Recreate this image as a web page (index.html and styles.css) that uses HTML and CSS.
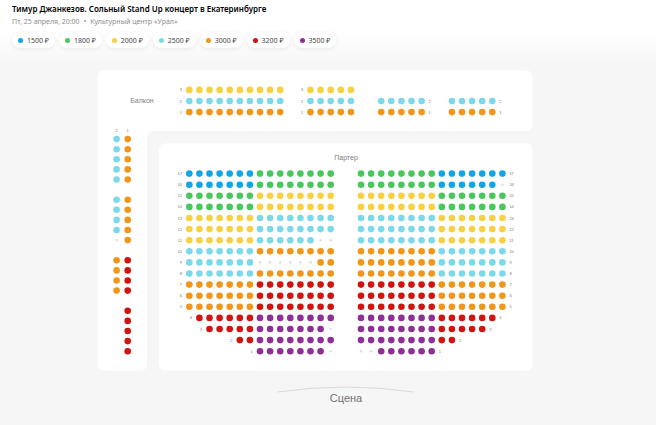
FILE: index.html
```html
<!DOCTYPE html>
<html lang="ru">
<head>
<meta charset="utf-8">
<meta name="viewport" content="width=device-width, initial-scale=1">
<title>Тимур Джанкезов. Сольный Stand Up концерт в Екатеринбурге</title>
<link rel="stylesheet" href="styles.css">
</head>
<body>
<header class="event">
  <h1 class="event-title">Тимур Джанкезов. Сольный Stand Up концерт в Екатеринбурге</h1>
  <p class="event-info"><span>Пт, 25 апреля, 20:00</span><span class="event-dot">•</span><span>Культурный центр «Урал»</span></p>
  <div class="prices">
    <button class="price" type="button"><span class="swatch swatch-b"></span>1500 ₽</button>
    <button class="price" type="button"><span class="swatch swatch-g"></span>1800 ₽</button>
    <button class="price" type="button"><span class="swatch swatch-y"></span>2000 ₽</button>
    <button class="price" type="button"><span class="swatch swatch-c"></span>2500 ₽</button>
    <button class="price" type="button"><span class="swatch swatch-o"></span>3000 ₽</button>
    <button class="price" type="button"><span class="swatch swatch-r"></span>3200 ₽</button>
    <button class="price" type="button"><span class="swatch swatch-p"></span>3500 ₽</button>
  </div>
</header>
<main class="hall">
  <svg class="hall-map" viewBox="0 64 656 361">
    <path class="zone" d="M103.500 70.500H526.500a6 6 0 0 1 6 6V125a6 6 0 0 1-6 6H153a6 6 0 0 0-6 6V364.500a6 6 0 0 1-6 6H103.500a6 6 0 0 1-6-6V76.500a6 6 0 0 1 6-6Z"/>
    <rect class="zone" x="159" y="143.500" width="373.500" height="227" rx="6"/>
    <text class="zone-name" x="142" y="103">Балкон</text>
    <text class="zone-name" x="346" y="159.500">Партер</text>
    <g id="seats"></g>
    <path class="stage-edge" d="M277.500 392Q346 382 413.500 392"/>
    <text class="stage-name" x="346" y="402">Сцена</text>
  </svg>
</main>
<script src="hall.js"></script>
</body>
</html>
```
FILE: styles.css
```css
* {
  box-sizing: border-box;
}

body {
  margin: 0;
  min-height: 100vh;
  background: #f6f6f6;
  color: #000;
  font-family: "Noto Sans", "Open Sans", sans-serif;
}

.event {
  padding: 3px 12px 16px;
  background: linear-gradient(#fff 50%, #f6f6f6);
}

.event-title {
  margin: 0;
  font-size: 8px;
  line-height: 12px;
  font-weight: 600;
}

.event-info {
  display: flex;
  gap: 4px;
  margin: 0;
  color: #8c8c8c;
  font-size: 7px;
  line-height: 13px;
}

.prices {
  display: flex;
  flex-wrap: wrap;
  gap: 4px;
  margin-top: 4px;
}

.price {
  display: flex;
  align-items: center;
  gap: 4px;
  height: 16px;
  padding: 0 6px;
  border: 0;
  border-radius: 8px;
  background: #fff;
  box-shadow: 0 1px 4px rgba(0, 0, 0, 0.08);
  color: #444;
  font: 7px "Noto Sans", "Open Sans", sans-serif;
  cursor: pointer;
}

.swatch {
  width: 5px;
  height: 5px;
  border-radius: 50%;
}

.swatch-b { background: #12a5e6; }
.swatch-g { background: #4ac75c; }
.swatch-y { background: #f7d142; }
.swatch-c { background: #7bd9ea; }
.swatch-o { background: #f0961b; }
.swatch-r { background: #d0140f; }
.swatch-p { background: #8e2f96; }

.hall-map {
  display: block;
  width: 100%;
  font-family: "Liberation Sans", Arial, sans-serif;
}

.zone {
  fill: #fff;
}

.zone-name {
  fill: #808080;
  font-size: 7px;
  text-anchor: middle;
}

.stage-name {
  fill: #707070;
  font-size: 11px;
  text-anchor: middle;
}

.stage-edge {
  fill: none;
  stroke: #dadada;
}

.row-name {
  fill: #777;
  font-size: 4px;
}

.row-name-start { text-anchor: end; }
.row-name-top { text-anchor: middle; }

.seat-b { fill: #12a5e6; }
.seat-g { fill: #4ac75c; }
.seat-y { fill: #f7d142; }
.seat-c { fill: #7bd9ea; }
.seat-o { fill: #f0961b; }
.seat-r { fill: #d0140f; }
.seat-p { fill: #8e2f96; }
.seat-x { fill: #dedede; }
```
FILE: hall.js
```js
// Seat codes: b g y c o r p are price groups, x is a sold seat, a space is an aisle.
const PITCH = 10.1;
const LEFT = 189.3;
const group = document.getElementById('seats');

function add(tag, attrs, text) {
  const node = document.createElementNS('http://www.w3.org/2000/svg', tag);
  for (const key in attrs) node.setAttribute(key, attrs[key]);
  if (text) node.textContent = text;
  group.appendChild(node);
}

function seat(code, x, y) {
  if (code === ' ') return;
  add('circle', { class: 'seat-' + code, cx: x, cy: y, r: code === 'x' ? 1.3 : 3.3 });
}

function row(name, codes, column, y, side) {
  const x = LEFT + column * PITCH;
  [...codes].forEach((code, i) => seat(code, x + i * PITCH, y));
  if (side === 'start') {
    add('text', { class: 'row-name row-name-start', x: x - 7.3, y: y + 1.5 }, name);
  } else {
    add('text', { class: 'row-name', x: x + (codes.length - 1) * PITCH + 7, y: y + 1.5 }, name);
  }
}

// Balcony, facing the stage
['y', 'c', 'o'].forEach((code, i) => {
  const y = 89.9 + i * 11.1;
  const name = String(3 - i);
  row(name, code.repeat(10), 0, y, 'start');
  row(name, code.repeat(5), 12, y, 'start');
  if (i > 0) {
    row(name, code.repeat(5), 19, y, 'end');
    row(name, code.repeat(5), 26, y, 'end');
  }
});

// Balcony, along the wall
[['2', 116.6, 'ccccc ccccx oooo'], ['1', 127.7, 'ooooo ooooo rrrr rrrrr']].forEach(([name, x, codes]) => {
  add('text', { class: 'row-name row-name-top', x, y: 131.5 }, name);
  [...codes].forEach((code, i) => seat(code, x, 139.1 + i * PITCH));
});

// Stalls, rows 17 to 1: left half, right half
[
  ['bbbbbbbgggggggg', 'ggggggggbbbbbbb'],
  ['bbbbbbbgggggggg', 'ggggggggbbbbbbx'],
  ['gggggggyyyyyyyy', 'yyyyyyyyggggggg'],
  ['gggggggyyyyyyyy', 'yyyyyyyyggggggg'],
  ['yyyyyyycccccccc', 'ccccccccyyyyyyy'],
  ['yyyyyyycccccccc', 'ccccccccyyyyyyy'],
  ['yyyyyyyccccccxx', 'ccccccccyyyyyyy'],
  ['cccccccoooooooo', 'ooooooooccccccc'],
  ['cccccccxxxxxxoo', 'ooooooooccccccc'],
  ['cccccccoooooooo', 'ooooooooccccccc'],
  ['ooooooorrrrrrrr', 'rrrrrrrrooooooo'],
  ['ooooooorrrrrrrr', 'rrrrrrrrooooooo'],
  ['ooooooorrrrrrrr', 'rrrrrrrrooooooo'],
  ['rrrrrrpppppppp', 'pppppppprrrrrr'],
  ['rrrrrpppppppx', 'pppppppprrrrr'],
  ['rrpppppppp', 'pppppppprr'],
  ['pppppppx', 'xxpppppp']
].forEach(([left, right], i) => {
  const y = 173.6 + i * 11.1;
  const name = String(17 - i);
  row(name, left, 15 - left.length, y, 'start');
  row(name, right, 17, y, 'end');
});
```
